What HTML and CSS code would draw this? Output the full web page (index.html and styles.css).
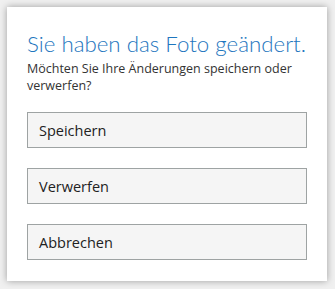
FILE: index.html
```html
<!DOCTYPE html>
<html lang="de">
<head>
    <meta charset="UTF-8">
    <meta name="viewport" content="width=device-width, initial-scale=1.0">
    <title>Foto geändert</title>
    <link rel="stylesheet" href="styles.css">
</head>
<body>
    <div class="dialog">
        <h1>Sie haben das Foto geändert.</h1>
        <p>Möchten Sie Ihre Änderungen speichern oder verwerfen?</p>
        <div class="actions">
            <button type="button">Speichern</button>
            <button type="button">Verwerfen</button>
            <button type="button">Abbrechen</button>
        </div>
    </div>
</body>
</html>
```

FILE: styles.css
```css
body {
    margin: 0;
    padding: 7px 8px 8px 7px;
    font-family: "Open Sans", "Noto Sans", sans-serif;
    background-color: #f0f0f0;
}
.dialog {
    background-color: #ffffff;
    box-shadow: 0 0 7px rgba(0,0,0,0.35);
    padding: 24px 20px 21px 20px;
    height: 274px;
    box-sizing: border-box;
}
.dialog h1 {
    margin: 0;
    font-family: "Lato", "Open Sans", sans-serif;
    font-size: 22.3px;
    font-weight: 300;
    line-height: 26px;
    color: #1e76be;
    white-space: nowrap;
}
.dialog p {
    margin: 3px 0 0 0;
    font-size: 12.5px;
    line-height: 17px;
    color: #333333;
}
.actions {
    display: flex;
    flex-direction: column;
    gap: 20px;
    margin-top: 18px;
}
.actions button {
    height: 36px;
    padding: 0 11px;
    text-align: left;
    font-family: inherit;
    font-size: 14.5px;
    color: #222222;
    background-color: #f5f5f5;
    border: 1px solid #9ea3a3;
    border-radius: 0;
}
```
